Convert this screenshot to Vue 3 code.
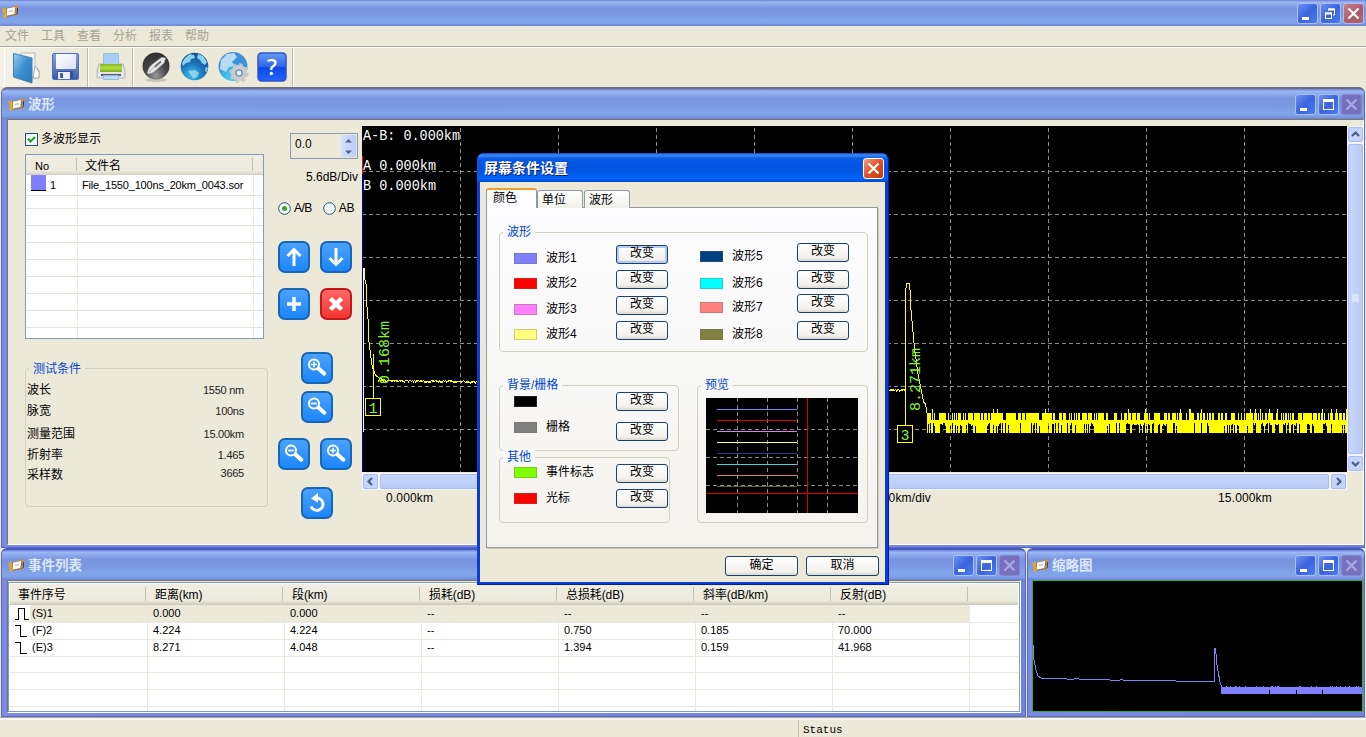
<script setup>
const menus = ['文件', '工具', '查看', '分析', '报表', '帮助']

const columns = ['事件序号', '距离(km)', '段(km)', '损耗(dB)', '总损耗(dB)', '斜率(dB/km)', '反射(dB)', '']
const events = [
  { icon: 'pulse', cells: ['(S)1', '0.000', '0.000', '--', '--', '--', '--', ''] },
  { icon: 'step', cells: ['(F)2', '4.224', '4.224', '--', '0.750', '0.185', '70.000', ''] },
  { icon: 'step', cells: ['(E)3', '8.271', '4.048', '--', '1.394', '0.159', '41.968', ''] },
  { cells: ['', '', '', '', '', '', '', ''] },
  { cells: ['', '', '', '', '', '', '', ''] },
  { cells: ['', '', '', '', '', '', '', ''] },
  { cells: ['', '', '', '', '', '', '', ''] },
]

const conditions = [
  ['波长', '1550 nm', 'c1'],
  ['脉宽', '100ns', 'c2'],
  ['测量范围', '15.00km', 'c3'],
  ['折射率', '1.465', 'c4'],
  ['采样数', '3665', 'c5'],
]

const waveLeft = [['#8080ff', '波形1'], ['#ff0000', '波形2'], ['#ff80ff', '波形3'], ['#ffff80', '波形4']]
const waveRight = [['#004080', '波形5'], ['#00ffff', '波形6'], ['#ff8080', '波形7'], ['#808040', '波形8']]
const backs = [['#000000', ''], ['#808080', '栅格']]
const others = [['#80ff00', '事件标志'], ['#ff0000', '光标']]
const preview = ['#8080ff', '#e00000', '#e080e0', '#ffff80', '#203c90', '#40d8d8', '#e07878', '#606030']

const gridX = [98, 196, 294, 392, 490, 588, 686, 784, 882]
const gridY = [45, 88, 131, 174, 217, 260, 303]

let seed = 1234567
const rnd = () => {
  seed = (seed * 1103515245 + 12345) % 2147483648
  return seed / 2147483648
}

// receiver noise past the end of the fibre
let noise = ''
let density = 0.6
for (let x = 565; x < 985; x++) {
  if (rnd() < 0.06) density = 0.35 + rnd() * 0.6
  const up = rnd()
  const top = up < 0.07 ? 283 : up < 0.62 ? 287 : 294
  const bottom = rnd() < density ? 307 : 297 + Math.floor(rnd() * 4)
  noise += `M${x + 0.5} ${top}V${bottom}`
}

let trace = 'M2.5 142V152L4.5 160V175L6.5 199V212L8.5 228L10.5 242L13.5 249L17 252L22 254'
let fuzz = ''
for (let x = 16; x < 543; x++) {
  const y = 254.5 + (x > 200 ? (x - 200) * 0.028 : (x - 24) * 0.012) + (rnd() - 0.5) * 1.4
  fuzz += `M${x + 0.5} ${(y - 0.5).toFixed(1)}v${rnd() < 0.5 ? 2 : 1}`
}
trace += 'M543.5 264.5V164L545 157H547L548.5 168V178L550.5 200L552.5 222L554.5 237L556.5 251L559.5 265L561.5 276L563.5 278L565 287'

let mini = 'M1.5 65V78L4 90L6 96L9 98'
for (let x = 12; x < 182; x += 3) mini += `L${x} ${(98 + x * 0.02 + rnd() * 0.5).toFixed(1)}`
mini += 'L182.5 102V68H183.5L185 85L188 102L190 108'
let miniNoise = ''
for (let x = 189; x < 330; x++) {
  const gap = x === 237 || x === 264 || x === 290
  miniNoise += `M${x + 0.5} ${rnd() < 0.15 ? 106 : 107}V${gap ? 110 : 114}`
}
</script>

<template>
  <div class="app">
    <svg class="defs" width="0" height="0">
      <defs>
        <linearGradient id="gb" x1="0" y1="0" x2="1" y2="1"><stop offset="0" stop-color="#9ccdf2" /><stop offset=".5" stop-color="#3c8fd0" /><stop offset="1" stop-color="#2a78bb" /></linearGradient>
        <linearGradient id="gf" x1="0" y1="0" x2="0" y2="1"><stop offset="0" stop-color="#88a0dc" /><stop offset="1" stop-color="#3c5cb0" /></linearGradient>
        <linearGradient id="gw" x1="0" y1="0" x2="1" y2="1"><stop offset="0" stop-color="#fff" /><stop offset="1" stop-color="#d9e2f2" /></linearGradient>
        <linearGradient id="gp" x1="0" y1="0" x2="0" y2="1"><stop offset="0" stop-color="#7cb41c" /><stop offset=".5" stop-color="#b4e044" /><stop offset="1" stop-color="#78ac18" /></linearGradient>
        <radialGradient id="gk" cx=".5" cy=".85" r=".8"><stop offset="0" stop-color="#999" /><stop offset=".5" stop-color="#484848" /><stop offset="1" stop-color="#303030" /></radialGradient>
        <radialGradient id="ge" cx=".4" cy=".8" r=".9"><stop offset="0" stop-color="#3cc0ec" /><stop offset=".5" stop-color="#1a70b4" /><stop offset="1" stop-color="#0c4888" /></radialGradient>
        <radialGradient id="gs" cx=".45" cy=".9" r="1"><stop offset="0" stop-color="#48d0f8" /><stop offset=".6" stop-color="#3894dc" /><stop offset="1" stop-color="#4c88d0" /></radialGradient>
        <linearGradient id="gq" x1="0" y1="0" x2="0" y2="1"><stop offset="0" stop-color="#6c9cf4" /><stop offset=".5" stop-color="#2c64ec" /><stop offset=".52" stop-color="#0c48e8" /><stop offset="1" stop-color="#2464fc" /></linearGradient>
      </defs>
      <symbol id="logo" viewBox="0 0 17 14">
        <path d="M0 3l3 1 1-2 1 2v7l-2 2-2-1 1-3z" fill="#f0a420" />
        <path d="M4 3l11-2-1 9-9 2z" fill="#8a7a58" />
        <path d="M5 3.500l8-1.500-.5 7-7.500 1.500z" fill="#fff" />
        <path d="M7 6.500l4-.8" stroke="#b8a890" />
        <path d="M12 1l4-1v3l-2 1zM13 7l2 1-.5 3-2.500-1z" fill="#d89028" />
        <path d="M15.500 3v5l-2 2" fill="none" stroke="#4c4430" />
      </symbol>
      <symbol id="zin" viewBox="0 0 32 32">
        <circle cx="13" cy="12.5" r="5" fill="none" stroke="#fff" stroke-width="2" />
        <path d="M10.2 12.5h5.6M13 9.7v5.6" stroke="#fff" stroke-width="1.5" />
        <path d="M17.500 16.500l5.800 5.200" stroke="#fff" stroke-width="4" stroke-linecap="round" />
      </symbol>
      <symbol id="zout" viewBox="0 0 32 32">
        <circle cx="13" cy="12.5" r="5" fill="none" stroke="#fff" stroke-width="2" />
        <path d="M10.2 12.5h5.6" stroke="#fff" stroke-width="1.8" />
        <path d="M17.500 16.500l5.800 5.200" stroke="#fff" stroke-width="4" stroke-linecap="round" />
      </symbol>
      <symbol id="min" viewBox="0 0 21 21"><rect x="5" y="14" width="7" height="3" fill="#fff" /></symbol>
      <symbol id="max" viewBox="0 0 21 21"><rect x="5.5" y="6" width="10" height="9.500" fill="none" stroke="#fff" /><path d="M5 6.500h11" stroke="#fff" stroke-width="3" /></symbol>
      <symbol id="restore" viewBox="0 0 21 21"><path d="M8.500 7.500V6h6v6H13" fill="none" stroke="#fff" /><path d="M8 6.500h7" stroke="#fff" stroke-width="2" /><rect x="5.500" y="10" width="6" height="5.500" fill="none" stroke="#fff" /><path d="M5 10.500h7" stroke="#fff" stroke-width="2" /></symbol>
      <symbol id="x" viewBox="0 0 21 21"><path d="M5.500 5.500l10 10M15.500 5.500l-10 10" stroke="currentColor" stroke-width="2.200" /></symbol>
    </svg>

    <header class="bar main">
      <svg class="logo"><use href="#logo" /></svg>
      <span class="grow"></span>
      <i class="cap"><svg><use href="#min" /></svg></i>
      <i class="cap"><svg><use href="#restore" /></svg></i>
      <i class="cap red"><svg><use href="#x" /></svg></i>
    </header>

    <nav class="menu"><span v-for="m in menus" :key="m">{{ m }}</span></nav>

    <div class="tools">
      <div class="toolgroup first">
        <svg width="30" height="34" viewBox="0 0 30 34"><path d="M9 3h14v13l4 4v8H9z" fill="#f4f4f4" stroke="#b8b8b8" /><path d="M23 16l4 6v6h-6z" fill="#fff" stroke="#aaa" /><path d="M1.500 3.500L20 8v25L1.500 27z" fill="url(#gb)" stroke="#3a80b8" /></svg>
        <svg width="28" height="30" viewBox="0 0 28 30"><rect x=".5" y="1.500" width="26" height="26" rx="1.500" fill="url(#gf)" stroke="#5070b8" /><rect x="4" y="2" width="20" height="15" fill="url(#gw)" /><rect x="5" y="19" width="16" height="8" fill="#3450a0" /><rect x="6" y="20" width="12" height="7" fill="#eef2fa" /><rect x="8" y="21" width="3" height="5" fill="#4060b0" /></svg>
      </div>
      <div class="toolgroup second">
        <svg width="30" height="30" viewBox="0 0 30 30"><path d="M3 12h24l2 7v7H1v-7z" fill="#e6e6ea" stroke="#b4b4b8" /><path d="M7.500 1.500h15V13h-15z" fill="#a8d0f4" stroke="#90bce8" /><rect x="4" y="12" width="22" height="8" rx="1" fill="url(#gp)" /><rect x="5" y="22" width="20" height="2" fill="#5c5c60" /><path d="M7.500 23.500h15v4h-15z" fill="#b8dcf8" stroke="#8fb8e4" /></svg>
      </div>
      <div class="toolgroup third">
        <svg width="30" height="30" viewBox="0 0 30 30"><ellipse cx="15" cy="28" rx="11" ry="2" fill="#c8c6ba" /><circle cx="15" cy="14" r="13.500" fill="url(#gk)" /><path d="M6.500 21.500c.5-5 3-8 6-10l8-6 4 .5-1.500 5-8 7c-2 2-5 4-8.500 3.500z" fill="#e8e8e8" stroke="#bbb" stroke-width=".6" /><path d="M13.500 15l6.500-5.500" stroke="#707070" stroke-width="1.800" /><path d="M8 20l5-5" stroke="#999" stroke-width=".8" /></svg>
        <svg width="30" height="30" viewBox="0 0 30 30"><circle cx="14.500" cy="14.500" r="13.800" fill="url(#ge)" /><path d="M5 6l5-4 4 1 1 3-4 1-1 3-4 1-3 3-1-3zM18 2l5 2 4 6-2 3-3-2-2-3-3-2zM8 19l7-1 4 3-2 4-4 2-2-4zM26 15l2 1-2 5-1-3z" fill="#8cd2ee" /></svg>
        <svg width="31" height="32" viewBox="0 0 31 32"><circle cx="15" cy="15.500" r="14.500" fill="url(#gs)" /><path d="M3 9l6-6 7-1 3 4-5 5 3 4-6 1-3 5-6-3z" fill="#b8dcf4" /><circle cx="21" cy="22" r="6" fill="none" stroke="#c8ccd0" stroke-width="4.500" /><circle cx="21" cy="22" r="8.300" fill="none" stroke="#c4c8cc" stroke-width="2.800" stroke-dasharray="3.260" /><circle cx="21" cy="22" r="3" fill="#e8ecf0" stroke="#7c8890" /></svg>
        <svg width="30" height="30" viewBox="0 0 30 30"><rect x="1" y="1" width="28" height="28" rx="3.500" fill="url(#gq)" stroke="#2858c8" stroke-width="1.500" /><text x="15" y="22.500" text-anchor="middle" class="qm">?</text></svg>
      </div>
    </div>

    <section class="win wave">
      <header class="bar">
        <svg class="logo"><use href="#logo" /></svg><b>波形</b><span class="grow"></span>
        <i class="cap"><svg><use href="#min" /></svg></i>
        <i class="cap"><svg><use href="#max" /></svg></i>
        <i class="cap off"><svg><use href="#x" /></svg></i>
      </header>
      <div class="client wavebody">
        <div class="left">
          <label class="check"><svg width="13" height="13"><rect x=".5" y=".5" width="12" height="12" fill="#f6f6f2" stroke="#1c5180" /><path d="M3 5.500l2.500 3L10 4" fill="none" stroke="#21a121" stroke-width="2" /></svg>多波形显示</label>
          <div class="files">
            <div class="fhead"><span class="n">No</span><span class="f">文件名</span><span></span></div>
            <div class="frow"><span class="n"><i class="sw"></i>1</span><span class="f">File_1550_100ns_20km_0043.sor</span><span></span></div>
            <div v-for="r in 9" :key="r" class="frow"><span></span><span></span><span></span></div>
          </div>
          <div class="group cond">
            <em>测试条件</em>
            <div v-for="c in conditions" :key="c[0]" class="crow" :class="c[2]"><span class="key">{{ c[0] }}</span><span class="val">{{ c[1] }}</span></div>
          </div>
        </div>
        <div class="mid">
          <div class="spin"><span>0.0</span><i><svg width="15" height="22" viewBox="0 0 15 22"><path d="M4 7.500L7.500 4 11 7.500zM4 15.500h7L7.500 19z" fill="#4d6185" /></svg></i></div>
          <div class="div">5.6dB/Div</div>
          <div class="radios">
            <svg width="13" height="13"><circle cx="6.500" cy="6.500" r="5.800" fill="#f8f8f4" stroke="#1c5180" /><circle cx="6.500" cy="6.500" r="2.500" fill="#2cae2c" /></svg><span class="ab">A/B</span>
            <svg width="13" height="13"><circle cx="6.500" cy="6.500" r="5.800" fill="#f8f8f4" stroke="#1c5180" /></svg><span>AB</span>
          </div>
          <div class="pair p1">
            <i class="btn"><svg viewBox="0 0 32 32"><path d="M16 25V9M9.500 15L16 8.500 22.500 15" /></svg></i>
            <i class="btn"><svg viewBox="0 0 32 32"><path d="M16 7v16M9.500 17L16 23.500 22.500 17" /></svg></i>
          </div>
          <div class="pair p2">
            <i class="btn"><svg viewBox="0 0 32 32"><path d="M16 9v14M9 16h14" stroke-width="3.500" /></svg></i>
            <i class="btn del"><svg viewBox="0 0 32 32"><path d="M10.500 10.500l11 11M21.500 10.500l-11 11" class="fat" /></svg></i>
          </div>
          <div class="pair p3"><i class="btn"><svg><use href="#zin" /></svg></i></div>
          <div class="pair p4"><i class="btn"><svg><use href="#zout" /></svg></i></div>
          <div class="pair p5"><i class="btn"><svg><use href="#zout" /></svg></i><i class="btn"><svg><use href="#zin" /></svg></i></div>
          <div class="pair p6"><i class="btn"><svg viewBox="0 0 32 32"><path d="M15 11a6.200 6.200 0 1 1-5 8.500" /><path d="M10 11.500l7-5.500v9.500z" fill="#fff" stroke="none" /></svg></i></div>
        </div>
        <div class="plot">
          <div class="plotrow">
            <svg class="chart" width="985" height="346" shape-rendering="crispEdges">
              <path v-for="x in gridX" :key="'x' + x" class="dash" :d="`M${x + 0.5} 2V346`" />
              <path v-for="y in gridY" :key="'y' + y" class="dash" :d="`M0 ${y + 0.5}H985`" />
              <path d="M.5 30V48" stroke="#f00000" />
              <path d="M.5 48V346" stroke="#0000a0" />
              <path d="M1.500 142V306" stroke="#fff" />
              <path :d="trace" class="trace" />
              <path :d="fuzz" class="trace" />
              <path :d="noise" class="trace" />
              <path d="M11.500 228V272M543.500 262V299" class="trace" />
              <rect x="3.500" y="272.500" width="15" height="17" class="tag" />
              <rect x="535.500" y="299.500" width="15" height="17" class="tag" />
              <text x="1" y="14" textLength="97" lengthAdjust="spacingAndGlyphs" class="white">A-B: 0.000km</text>
              <text x="1" y="43.500" textLength="73" lengthAdjust="spacingAndGlyphs" class="white">A 0.000km</text>
              <text x="1" y="63.500" textLength="73" lengthAdjust="spacingAndGlyphs" class="white">B 0.000km</text>
              <text x="6.500" y="287" class="green">1</text>
              <text x="538.500" y="314" class="green">3</text>
              <text transform="translate(27 258) rotate(-90)" textLength="63" class="green">0.168km</text>
              <text transform="translate(558 285) rotate(-90)" textLength="63" class="green">8.271km</text>
            </svg>
            <div class="vs"><i><svg viewBox="0 0 15 15"><path d="M4 9l3.500-3.500L11 9" /></svg></i><b><svg width="8" height="10"><path d="M0 1h7M0 3h7M0 5h7M0 7h7" stroke="#eef4fe" /></svg></b><i><svg viewBox="0 0 15 15"><path d="M4 6l3.500 3.500L11 6" /></svg></i></div>
          </div>
          <div class="hs"><i><svg viewBox="0 0 15 15"><path d="M9 4L5.500 7.500 9 11" /></svg></i><b></b><i><svg viewBox="0 0 15 15"><path d="M6 4l3.500 3.500L6 11" /></svg></i></div>
          <div class="axis"><span>0.000km</span><span class="per">1.500km/div</span><span class="end">15.000km</span></div>
        </div>
      </div>
    </section>

    <section class="win ev">
      <header class="bar">
        <svg class="logo"><use href="#logo" /></svg><b>事件列表</b><span class="grow"></span>
        <i class="cap"><svg><use href="#min" /></svg></i>
        <i class="cap"><svg><use href="#max" /></svg></i>
        <i class="cap off"><svg><use href="#x" /></svg></i>
      </header>
      <div class="client evbody">
        <div class="table">
          <div class="trow thead"><span v-for="(c, i) in columns" :key="i">{{ c }}</span></div>
          <div v-for="(e, i) in events" :key="i" class="trow" :class="{ sel: i === 0 }">
            <span v-for="(c, j) in e.cells" :key="j"><template v-if="j === 0 && e.icon"><svg class="evi" width="20" height="16" shape-rendering="crispEdges"><path :d="e.icon === 'pulse' ? 'M5 14.500H8.500V3.500H14.500V14.500H19' : 'M5 3.500H10.500V14.500H17'" fill="none" stroke="#000" /></svg></template>{{ c }}</span>
          </div>
        </div>
      </div>
    </section>

    <section class="win mini">
      <header class="bar">
        <svg class="logo"><use href="#logo" /></svg><b>缩略图</b><span class="grow"></span>
        <i class="cap"><svg><use href="#min" /></svg></i>
        <i class="cap"><svg><use href="#max" /></svg></i>
        <i class="cap off"><svg><use href="#x" /></svg></i>
      </header>
      <svg class="minichart" width="331" height="132" shape-rendering="crispEdges">
        <rect width="331" height="132" />
        <path :d="mini" class="mt" />
        <path :d="miniNoise" class="mt" />
        <rect x=".5" y=".5" width="330" height="131" fill="none" stroke="#30b030" />
      </svg>
    </section>

    <footer class="status"><span></span><span class="s">Status</span></footer>

    <section class="dialog">
      <header><b>屏幕条件设置</b><i><svg><use href="#x" /></svg></i></header>
      <div class="dbody">
        <div class="tabs"><span class="on">颜色</span><span>单位</span><span class="last">波形</span></div>
        <div class="panel">
          <div class="group gwave">
            <em>波形</em>
            <div class="labs l1"><div v-for="w in waveLeft" :key="w[1]"><i :style="{ background: w[0] }"></i>{{ w[1] }}</div></div>
            <div class="btns l1"><button v-for="(w, i) in waveLeft" :key="i" :class="{ focus: i === 0 }">改变</button></div>
            <div class="labs r1"><div v-for="w in waveRight" :key="w[1]"><i :style="{ background: w[0] }"></i>{{ w[1] }}</div></div>
            <div class="btns r1"><button v-for="(w, i) in waveRight" :key="i">改变</button></div>
          </div>
          <div class="lower">
            <div class="stack">
              <div class="group gback">
                <em>背景/栅格</em>
                <div class="labs l2"><div v-for="w in backs" :key="w[0]"><i :style="{ background: w[0] }"></i>{{ w[1] }}</div></div>
                <div class="btns l2"><button v-for="w in backs" :key="w[0]">改变</button></div>
              </div>
              <div class="group gother">
                <em>其他</em>
                <div class="labs l3"><div v-for="w in others" :key="w[0]"><i :style="{ background: w[0] }"></i>{{ w[1] }}</div></div>
                <div class="btns l3"><button v-for="w in others" :key="w[0]">改变</button></div>
              </div>
            </div>
            <div class="group gprev">
              <em>预览</em>
              <svg width="152" height="115" shape-rendering="crispEdges">
                <rect width="152" height="115" />
                <path class="dash" d="M31.500 0V115M61.500 0V115M91.500 0V115M121.500 0V115M0 31.500H152M0 59.500H152M0 87.500H152" />
                <path v-for="(p, i) in preview" :key="p" :stroke="p" :d="`M11 ${11.500 + i * 11}H91`" />
                <path stroke="#d80000" d="M101.500 0V115M0 95.500H152" />
              </svg>
            </div>
          </div>
        </div>
        <div class="ok"><button>确定</button><button>取消</button></div>
      </div>
    </section>
  </div>
</template>

<style>
html, body { margin: 0; overflow: hidden; }
</style>

<style scoped>
.app, .app * { box-sizing: border-box; }
.app { position: relative; width: 1366px; height: 737px; overflow: hidden; background: #ece9d8; font: 12px/14px "Liberation Sans", "Noto Sans CJK SC", sans-serif; color: #000; }
.app svg { display: block; flex: none; }
.app i { font-style: normal; flex: none; display: block; }
.defs { position: absolute; }
.grow { flex: 1; }

.bar { display: flex; align-items: center; height: 30px; padding: 1px 2px 0 6px; background: linear-gradient(#6c82d8 0, #9ab8f2 8%, #8aa8ec 18%, #7a94e0 32%, #7b98e2 55%, #82a6ea 80%, #7f9fe8 90%, #6c82d4 100%); color: #dce8fb; }
.bar b { font-size: 13.500px; line-height: 20px; margin-left: 3px; font-weight: 700; }
.bar.main { height: 26px; padding: 0 2px 0 2px; }
.main .logo { margin-bottom: 2px; }
.logo { width: 17px; height: 14px; }
.cap { width: 21px; height: 21px; margin-left: 2px; border: 1px solid #a9c0f4; border-radius: 3px; background: linear-gradient(135deg, #6f92f2, #3c64dc 50%, #4c7cf0); color: #fff; }
.cap svg { width: 21px; height: 21px; margin: -1px; }
.cap.red { background: linear-gradient(135deg, #c88088, #b05868 60%, #b86470); }
.cap.off { background: #7770bc; border-color: #8486cc; color: #aaa8e4; }

.menu { display: flex; height: 21px; padding: 3px 5px 0; gap: 12px; color: #a5a292; border-bottom: 1px solid #aca899; }
.tools { display: flex; height: 40px; border-top: 1px solid #fff; padding-left: 4px; background: linear-gradient(90deg, #f4f2e8, #ece9d8 60px); }
.toolgroup { display: flex; align-items: center; border-right: 1px solid #bdbaa8; box-shadow: 1px 0 #fff; padding-bottom: 1px; }
.toolgroup.first { width: 84px; padding-left: 7px; gap: 10px; border-left: 1px solid #fff; }
.toolgroup.second { width: 45px; padding-left: 8px; }
.toolgroup.third { width: 160px; padding-left: 8px; gap: 9px; }
.toolgroup.third svg + svg { margin-right: -1px; }
.qm { font: 600 22px "Open Sans", "Liberation Sans", sans-serif; fill: #fff; }

.win { position: absolute; background: linear-gradient(90deg, #7a8ae8, #6f84e0); border: 1px solid #5c68bc; border-radius: 6px 6px 0 0; overflow: hidden; }
.client { background: #ece9d8; border: 1px solid #77766c; border-right-color: #fff; border-bottom-color: #fff; }
.wave { left: 1px; top: 87px; width: 1364px; height: 461px; border-top: 2px solid #6c6c80; }
.wavebody { height: 426px; margin: 0 0 0 5px; display: flex; align-items: flex-start; }
.left { width: 243px; margin-left: 17px; padding-top: 12px; }
.check { display: flex; align-items: center; gap: 3px; height: 14px; }
.files { width: 239px; height: 185px; margin-top: 8px; border: 1px solid #7f9db9; background: #fff; overflow: hidden; font-size: 11px; }
.fhead, .frow { display: grid; grid-template-columns: 52px 176px 1fr; height: 17px; }
.fhead { height: 20px; background: linear-gradient(#f0eee2, #ebeadb 80%, #d2cebd); padding-top: 3px; }
.fhead span { border-right: 1px solid #c4c1b0; height: 13px; margin-right: 1px; line-height: 16px; }
.fhead .n { padding-left: 9px; }
.fhead .f { padding-left: 7px; font-size: 12px; }
.frow span { border-right: 1px solid #eae8dc; border-bottom: 1px solid #e6e4d8; line-height: 20px; white-space: nowrap; }
.fhead span:last-child, .frow span:last-child { border-right: 0; }
.frow .f { padding-left: 4px; letter-spacing: -.18px; }
.frow .n { display: flex; padding-left: 5px; gap: 4px; }
.sw { width: 15px; height: 16px; background: #8080ff; border-bottom: 1px solid #000; }

.group { position: relative; display: flex; align-items: flex-start; border: 1px solid #d0d0bf; border-radius: 4px; }
.group em { position: absolute; left: 4px; top: -8px; padding: 0 4px; font-style: normal; color: #0046d5; background: #ece9d8; line-height: 15px; }
.group.cond { display: block; height: 139px; margin-top: 29px; padding: 13px 23px 0 1px; }
.cond em { left: 3px; top: -7px; }
.crow { display: flex; justify-content: space-between; }
.crow .key { padding-top: 1px; }
.crow .val { font-size: 11px; letter-spacing: -.25px; color: #222; padding-top: 1px; }
.c1 { height: 21px; } .c2 { height: 23px; } .c3 { height: 21px; } .c4 { height: 20px; }
.c5 .val { margin-top: -2px; }

.mid { width: 81px; margin-left: 10px; padding-top: 13px; }
.spin { width: 68px; height: 26px; margin-left: 12px; border: 1px solid #8a9cb4; display: flex; justify-content: space-between; padding: 1px; }
.spin span { padding: 2px 0 0 3px; }
.spin i { width: 15px; background: linear-gradient(90deg, #d4e0fc, #b8ccf8); border-radius: 2px; }
.div { text-align: right; margin-top: 11px; height: 14px; padding-right: 1px; }
.radios { display: flex; align-items: center; gap: 3px; margin-top: 17px; height: 14px; }
.radios .ab { margin-right: 8px; letter-spacing: -.5px; }
.radios span { white-space: nowrap; letter-spacing: -.4px; }
.pair { display: flex; gap: 10px; }
.btn { width: 32px; height: 32px; border-radius: 7px; border: 2px solid #1666b4; background: linear-gradient(#4aa2fc, #1c86fa); }
.btn svg { width: 32px; height: 32px; margin: -2px; fill: none; stroke: #fff; stroke-width: 3px; }
.btn svg:has(use) { stroke: none; stroke-width: 0; }
.btn .fat { stroke-width: 4.500px; }
.btn.del { border-color: #c41818; background: linear-gradient(#ff6868, #f43434); }
.p1 { margin-top: 26px; } .p2 { margin-top: 15px; }
.p3 { margin: 32px 0 0 23px; } .p4 { margin: 7px 0 0 23px; } .p5 { margin-top: 15px; } .p6 { margin: 17px 0 0 23px; }

.plot { width: 1001px; flex: none; margin-left: 3px; padding-top: 6px; }
.plotrow { display: flex; }
.chart { background: #000; }
.dash { stroke: #8c8c8c; stroke-dasharray: 4 3; fill: none; }
.trace { stroke: #ffff00; fill: none; }
.tag { fill: #000; stroke: #ffff00; }
.white { fill: #fff; font: 14.500px "Liberation Mono", monospace; }
.green { fill: #84f828; font: 15px "Liberation Mono", monospace; }
.vs { width: 16px; height: 346px; display: flex; flex-direction: column; gap: 2px; padding: 1px 0 1px 1px; background: #f4f4fa; }
.hs { width: 985px; height: 17px; display: flex; gap: 2px; padding: 1px; background: #f4f4fa; margin-top: 1px; }
.vs i, .hs i { width: 15px; height: 15px; border: 1px solid #a8bcf0; border-radius: 2px; background: #c4d4fc; }
.vs i svg, .hs i svg { width: 15px; height: 15px; margin: -1px; fill: none; stroke: #4d6185; stroke-width: 2.200px; }
.vs b { flex: 1; display: flex; align-items: center; justify-content: center; border: 1px solid #a8bcf0; border-radius: 2px; background: linear-gradient(90deg, #c8d6fb, #b8cbf6); }
.hs b { flex: 1; border: 1px solid #a8bcf0; border-radius: 2px; background: linear-gradient(#c8d6fb, #b8cbf6); }
.axis { display: grid; grid-template-columns: 462px 83px auto; padding: 1px 0 0 24px; letter-spacing: .15px; }
.axis .per { text-align: right; }
.axis .end { padding-left: 287px; }

.ev { left: 1px; top: 548px; width: 1025px; height: 169px; border-top: 2px solid #4858c0; }
.ev .bar { padding-right: 5px; }
.evbody { height: 133px; margin: 0 4px 0 5px; padding: 1px 0 0; }
.table { height: 130px; border: 1px solid #7f9db9; background: #fff; overflow: hidden; font-size: 11px; padding: 1px; }
.trow { display: grid; grid-template-columns: 138px 137px 137px 137px 137px 137px 137px 1fr; height: 17px; }
.trow span { border-right: 1px solid #eae8dc; border-bottom: 1px solid #eae8dc; padding-left: 5px; line-height: 17px; display: flex; white-space: nowrap; }
.trow span:first-child { padding-left: 0; }
.trow span:last-child { border-right: 0; }
.trow.sel span:not(:last-child) { background: #ece9d8; }
.trow .evi { background: #fff; margin-right: 2px; }
.trow.thead { height: 21px; background: linear-gradient(#f0eee2, #ebeadb 80%, #cbc7b8); padding-top: 3px; }
.trow.thead span { height: 14px; margin-right: 2px; border-bottom: 0; border-right-color: #c4c1b0; line-height: 17px; font-size: 12px; letter-spacing: -.1px; }
.trow.thead span:first-child { padding-left: 8px; }
.trow.thead span + span { margin-left: -1px; padding-left: 8px; }

.mini { left: 1027px; top: 548px; width: 338px; height: 169px; border-top: 2px solid #4858c0; }
.mini .bar { padding-left: 4px; }
.minichart { margin-left: 4px; }
.mt { stroke: #8080ff; fill: none; }

.status { position: absolute; left: 0; right: 0; bottom: 0; height: 20px; display: flex; border-top: 1px solid #aca899; box-shadow: inset 0 2px #f8f6ee; font: 11px/20px "Liberation Mono", monospace; padding-top: 2px; }
.status span:first-child { width: 799px; border-right: 1px solid #c4c1b0; }
.status .s { padding-left: 4px; }

.dialog { position: absolute; left: 477px; top: 153px; width: 412px; height: 432px; border-radius: 7px 7px 0 0; background: #0a3cd8; padding: 0 3px 3px; border-right: 1px solid #0020a0; border-bottom: 1px solid #0020a0; }
.dialog header { height: 29px; margin: 0 -3px; padding: 1px 4px 0 7px; display: flex; align-items: center; justify-content: space-between; border-radius: 7px 7px 0 0; color: #fff; background: linear-gradient(#0a48c8 0, #3c8cf8 7%, #0858e4 20%, #0054e0 60%, #0064fc 88%, #0048d0 100%); }
.dialog header b { font-size: 14px; text-shadow: 1px 1px #0a2080; line-height: 20px; }
.dialog header i { width: 21px; height: 21px; border: 1px solid #fff; border-radius: 3px; color: #fff; background: linear-gradient(135deg, #f0a080, #e05028 50%, #c43c10); }
.dialog header svg { width: 21px; height: 21px; margin: -1px; }
.dbody { height: 400px; background: #ece9d8; padding: 6px 7px 0 6px; }
.tabs { display: flex; height: 20px; align-items: flex-end; margin-bottom: -1px; }
.tabs span { position: relative; width: 46px; height: 18px; border: 1px solid #919b9c; border-bottom: 0; border-radius: 3px 3px 0 0; background: linear-gradient(#fff, #f0f0ea); padding: 2px 4px 0; }
.tabs span.last { margin-left: 1px; }
.tabs .on { width: 51px; height: 20px; border-top: 2px solid #f0a030; padding: 1px 6px 0; background: #fcfcfe; z-index: 1; }
.panel { height: 341px; border: 1px solid #919b9c; box-shadow: 1px 1px #d0cec0; background: linear-gradient(#fcfcfe, #f4f3ee); padding: 24px 9px 0 12px; }
.dialog .group em { background: #f9f9fa; left: 3px; }
.gwave { height: 120px; }
.labs, .btns { display: grid; }
.labs { width: 102px; margin-left: 14px; flex: none; }
.labs div { display: flex; align-items: center; height: 16px; gap: 9px; }
.labs i { width: 23px; height: 11px; border: 1px solid rgba(110, 110, 90, .35); }
.l1 { grid-template-rows: 25px 26px 25px 19px; }
.r1 { grid-template-rows: 27px 24px 27px 19px; }
.l2 { grid-template-rows: 30px 19px; }
.l3 { grid-template-rows: 25px 19px; }
.labs.l1 { padding-top: 17px; } .btns.l1 { padding-top: 12px; }
.labs.r1 { padding-top: 15px; width: 97px; margin-left: 32px; } .btns.r1 { padding-top: 10px; }
.labs.l2 { padding-top: 7px; grid-template-rows: 26px 19px; } .btns.l2 { padding-top: 6px; }
.labs.l3 { padding-top: 6px; grid-template-rows: 26px 19px; } .btns.l3 { padding-top: 6px; }
button { width: 52px; height: 19px; padding: 0 0 2px; border: 1px solid #1c4070; border-radius: 3px; background: linear-gradient(#fff, #f2f1ec 80%, #dcd8cc); font: 12px/15px "Liberation Sans", "Noto Sans CJK SC", sans-serif; color: #000; }
button.focus { box-shadow: inset 0 0 0 2px #b4ccf4; }
.lower { display: flex; justify-content: space-between; margin-top: 33px; }
.gback { width: 180px; height: 66px; }
.gother { width: 171px; height: 66px; margin-top: 6px; }
.gprev { width: 171px; height: 138px; padding: 12px 0 0 8px; }
.ok { display: flex; justify-content: flex-end; gap: 8px; padding-top: 8px; margin-right: -1px; }
.ok button { width: 73px; height: 20px; }
</style>
